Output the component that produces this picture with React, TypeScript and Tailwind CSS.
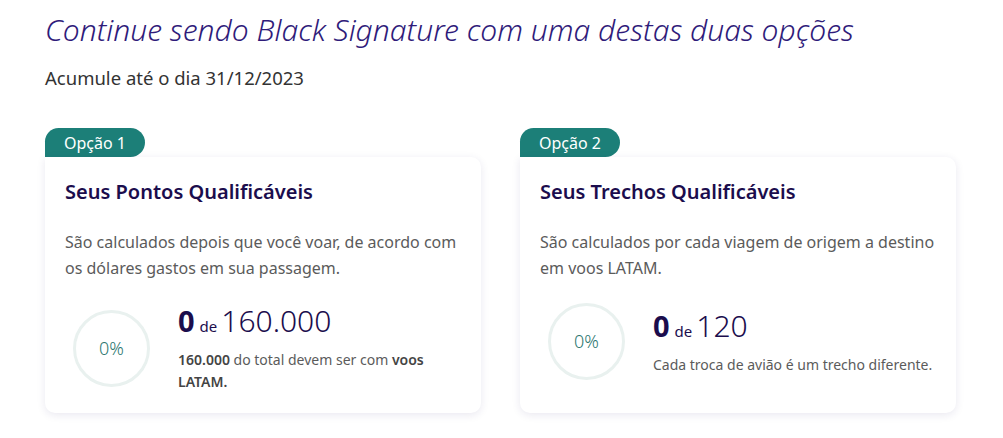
import type { ReactNode } from "react";

type Option = {
  tab: string;
  title: string;
  description: string;
  total: string;
  note: ReactNode;
};

const options: Option[] = [
  {
    tab: "Opção 1",
    title: "Seus Pontos Qualificáveis",
    description:
      "São calculados depois que você voar, de acordo com os dólares gastos em sua passagem.",
    total: "160.000",
    note: (
      <>
        <strong className="font-semibold text-[#444]">160.000</strong> do total
        devem ser com <strong className="font-semibold text-[#444]">voos LATAM.</strong>
      </>
    ),
  },
  {
    tab: "Opção 2",
    title: "Seus Trechos Qualificáveis",
    description:
      "São calculados por cada viagem de origem a destino em voos LATAM.",
    total: "120",
    note: "Cada troca de avião é um trecho diferente.",
  },
];

function ProgressRing({ percent }: { percent: number }) {
  return (
    <div className="relative flex h-[77px] w-[77px] shrink-0 items-center justify-center">
      <svg width="77" height="77" viewBox="0 0 77 77" className="absolute inset-0">
        <circle cx="38.5" cy="38.5" r="37" fill="none" stroke="#e9f1ef" strokeWidth="3" />
      </svg>
      <span className="text-[18px] font-light text-[#2c776f]">{percent}%</span>
    </div>
  );
}

function OptionCard({ option }: { option: Option }) {
  return (
    <div className="flex w-[436px] flex-col">
      <div className="flex h-[29px] w-[100px] items-center justify-center rounded-tl-[14px] rounded-tr-[15px] rounded-br-[15px] bg-[#1c7f78] text-[16px] text-white">
        {option.tab}
      </div>
      <div className="flex h-[256px] flex-col rounded-b-[10px] rounded-tr-[10px] bg-white px-5 pt-[20px] shadow-[0_2px_8px_rgba(40,30,110,0.1)]">
        <h2 className="text-[20px] font-semibold leading-[30px] text-[#1b0d4d]">
          {option.title}
        </h2>
        <p className="mt-[22px] text-[16px] leading-[26px] text-[#5b5b5b]">
          {option.description}
        </p>
        <div className="mt-[22px] flex items-center gap-[28px] pl-[8px]">
          <ProgressRing percent={0} />
          <div className="flex flex-1 flex-col">
            <div className="flex items-baseline text-[#1b0d4d]">
              <span className="text-[29px] font-bold leading-[36px]">0</span>
              <span className="ml-[5px] mr-[4px] text-[15px]">de</span>
              <span className="text-[30px] font-light leading-[36px]">{option.total}</span>
            </div>
            <p className="mt-[10px] text-[14px] leading-[22px] text-[#5b5b5b]">
              {option.note}
            </p>
          </div>
        </div>
      </div>
    </div>
  );
}

export default function App() {
  return (
    <main className="min-h-[438px] bg-white pl-[45px] pt-[8px] font-['Noto_Sans',sans-serif]">
      <h1 className="text-[30px] font-light italic leading-[44px] text-[#2f1b7a]">
        Continue sendo Black Signature com uma destas duas opções
      </h1>
      <p className="mt-[14px] text-[18.5px] leading-[24px] text-[#333]">
        Acumule até o dia 31/12/2023
      </p>
      <div className="mt-[38px] flex gap-[39px]">
        {options.map((option) => (
          <OptionCard key={option.tab} option={option} />
        ))}
      </div>
    </main>
  );
}
